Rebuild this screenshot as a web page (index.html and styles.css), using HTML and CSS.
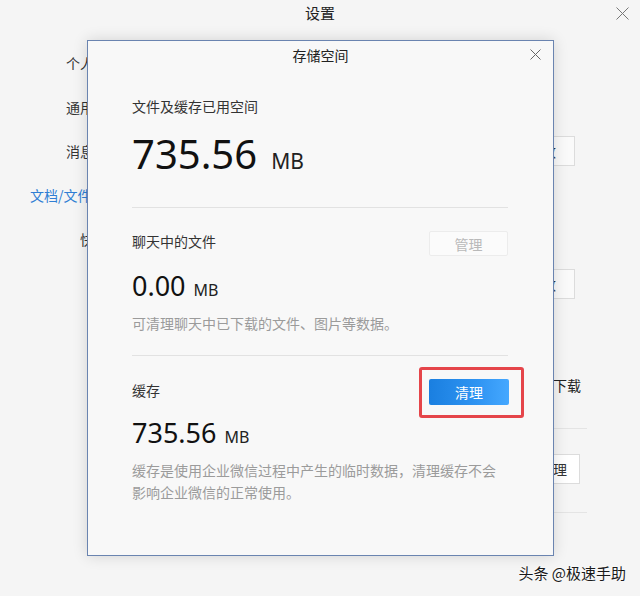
FILE: index.html
```html
<!DOCTYPE html>
<html lang="zh">
<head>
<meta charset="utf-8">
<title>设置</title>
<link rel="stylesheet" href="styles.css">
</head>
<body>
<div class="page">
  <header class="page-head">
    <span class="page-title">设置</span>
    <span class="page-close"><svg width="13" height="13" viewBox="0 0 13 13"><path d="M0.5 0.5L12.5 12.5M12.5 0.5L0.5 12.5" stroke="#777" stroke-width="1"/></svg></span>
  </header>
  <div class="page-body">
    <nav class="nav">
      <div class="nav-item">个人信息</div>
      <div class="nav-item">通用设置</div>
      <div class="nav-item">消息通知</div>
      <div class="nav-item active">文档/文件管理</div>
      <div class="nav-item sub">快捷键设置</div>
    </nav>
    <section class="content">
      <div class="row r1"><span class="box">更改</span></div>
      <div class="row r2"><span class="box">更改</span></div>
      <div class="row r3"><span class="txt">自动下载</span></div>
      <div class="hline l1"></div>
      <div class="row r4"><span class="box b2">清理</span></div>
      <div class="hline l2"></div>
    </section>
  </div>

  <div class="dialog">
    <div class="dlg-head">
      <span class="dlg-title">存储空间</span>
      <span class="dlg-close"><svg width="11" height="11" viewBox="0 0 11 11"><path d="M0.5 0.5L10.5 10.5M10.5 0.5L0.5 10.5" stroke="#666" stroke-width="1"/></svg></span>
    </div>
    <div class="dlg-body">
      <div class="sec sec-total">
        <div class="label">文件及缓存已用空间</div>
        <div class="big"><span class="num">735.56</span><span class="unit">MB</span></div>
      </div>
      <div class="sep"></div>
      <div class="sec">
        <div class="sec-row">
          <div class="label">聊天中的文件</div>
          <button class="btn btn-ghost">管理</button>
        </div>
        <div class="mid"><span class="num">0.00</span><span class="unit">MB</span></div>
        <div class="desc">可清理聊天中已下载的文件、图片等数据。</div>
      </div>
      <div class="sep sep-2"></div>
      <div class="sec">
        <div class="sec-row">
          <div class="label label-cache">缓存</div>
          <div class="btn-wrap">
            <button class="btn btn-primary">清理</button>
            <span class="highlight"></span>
          </div>
        </div>
        <div class="mid mid-cache"><span class="num">735.56</span><span class="unit">MB</span></div>
        <div class="desc desc-cache">缓存是使用企业微信过程中产生的临时数据，清理缓存不会影响企业微信的正常使用。</div>
      </div>
    </div>
  </div>

  <div class="watermark">头条 @极速手助</div>
</div>
</body>
</html>
```
FILE: styles.css
```css
html, body {
  margin: 0;
  padding: 0;
  background: #f5f5f5;
}
body {
  font-family: "Noto Sans CJK SC", "Noto Sans", sans-serif;
  color: #333;
  width: 640px;
  height: 596px;
  overflow: hidden;
}
.page {
  position: relative;
  width: 640px;
  height: 596px;
  overflow: hidden;
}
.page-head {
  height: 26px;
  display: flex;
  justify-content: center;
  align-items: center;
  position: relative;
}
.page-title {
  font-size: 15px;
  line-height: 26px;
  color: #222;
}
.page-close {
  position: absolute;
  right: 11px;
  top: 7px;
  width: 13px;
  height: 13px;
  display: flex;
}
.page-body {
  display: flex;
}
.nav {
  width: 290px;
  padding-top: 27px;
  display: flex;
  flex-direction: column;
  gap: 24px;
  font-size: 14px;
}
.nav-item {
  width: 87px;
  box-sizing: border-box;
  overflow: hidden;
  line-height: 20px;
  padding-left: 66px;
  white-space: nowrap;
  color: #333;
}
.nav-item.active {
  padding-left: 30px;
  color: #2f7ed4;
}
.nav-item.sub {
  padding-left: 80px;
}
.content {
  width: 297px;
  display: flex;
  flex-direction: column;
  font-size: 14px;
}
.row {
  display: flex;
  justify-content: flex-end;
}
.box {
  border: 1px solid #dcdcdc;
  background: #fafafa;
  height: 28px;
  line-height: 28px;
  padding: 0 18px 0 30px;
  color: #333;
  white-space: nowrap;
}
.r1 { margin-top: 110px; margin-right: 12px; }
.r2 { margin-top: 103px; margin-right: 12px; }
.r3 { margin-top: 76px; margin-right: 6px; line-height: 20px; }
.txt { white-space: nowrap; color: #222; }
.hline {
  height: 1px;
  background: #e4e4e4;
  margin-left: 40px;
}
.l1 { margin-top: 33px; }
.r4 { margin-top: 25px; margin-right: 7px; }
.b2 { padding: 0 12px 0 20px; background: #fff; }
.l2 { margin-top: 28px; }

/* dialog */
.dialog {
  position: absolute;
  left: 87px;
  top: 40px;
  width: 467px;
  height: 516px;
  box-sizing: border-box;
  border: 1px solid #6a84b0;
  background: #f8f8f8;
  box-shadow: 0 0 14px rgba(0, 0, 0, 0.14);
  display: flex;
  flex-direction: column;
}
.dlg-head {
  height: 28px;
  display: flex;
  justify-content: center;
  align-items: center;
  position: relative;
}
.dlg-title {
  font-size: 14px;
  line-height: 28px;
  color: #222;
}
.dlg-close {
  position: absolute;
  right: 12px;
  top: 8px;
  width: 11px;
  height: 11px;
  display: flex;
}
.dlg-body {
  padding: 27px 45px 0 44px;
}
.label {
  font-size: 14px;
  line-height: 20px;
  color: #333;
}
.num {
  font-family: "Noto Sans", sans-serif;
  color: #111;
}
.unit {
  font-family: "Noto Sans", sans-serif;
  color: #222;
}
.big {
  margin-top: 16px;
  font-size: 40px;
  line-height: 40px;
  height: 40px;
}
.big .unit {
  font-size: 21px;
  margin-left: 14px;
}
.sep {
  height: 1px;
  background: #e2e2e2;
  margin-top: 35px;
}
.sep-2 {
  margin-top: 22px;
}
.sec-row {
  display: flex;
  justify-content: space-between;
  align-items: flex-start;
  margin-top: 23px;
}
.btn {
  width: 79px;
  height: 26px;
  border-radius: 2px;
  font-family: "Noto Sans CJK SC", sans-serif;
  font-size: 14px;
  padding: 0;
  cursor: pointer;
}
.btn-ghost {
  border: 1px solid #ececec;
  background: #fbfbfb;
  color: #b9b9b9;
  height: 25px;
}
.btn-wrap {
  position: relative;
  display: flex;
}
.btn-primary {
  border: none;
  background: linear-gradient(90deg, #1a7fe0 0%, #2f94f2 60%, #45a8ff 100%);
  color: #fff;
  width: 80px;
  margin-right: -1px;
}
.highlight {
  position: absolute;
  left: -10px;
  top: -12px;
  right: -16px;
  bottom: -13px;
  border: 3px solid #e5454a;
  border-radius: 3px;
  pointer-events: none;
}
.label-cache {
  margin-top: 1px;
}
.mid {
  margin-top: 14px;
  font-size: 27px;
  line-height: 30px;
  height: 30px;
}
.mid .unit {
  font-size: 16px;
  margin-left: 8px;
}
.mid-cache {
  margin-top: 12px;
}
.desc {
  margin-top: 13px;
  font-size: 14px;
  line-height: 20px;
  color: #9b9b9b;
}
.desc-cache {
  margin-top: 12px;
  line-height: 22px;
}
.watermark {
  position: absolute;
  right: 14px;
  bottom: 13px;
  font-size: 15px;
  line-height: 20px;
  color: #1a1a1a;
  text-shadow: 0 0 2px #fff, 0 0 2px #fff;
}
```
